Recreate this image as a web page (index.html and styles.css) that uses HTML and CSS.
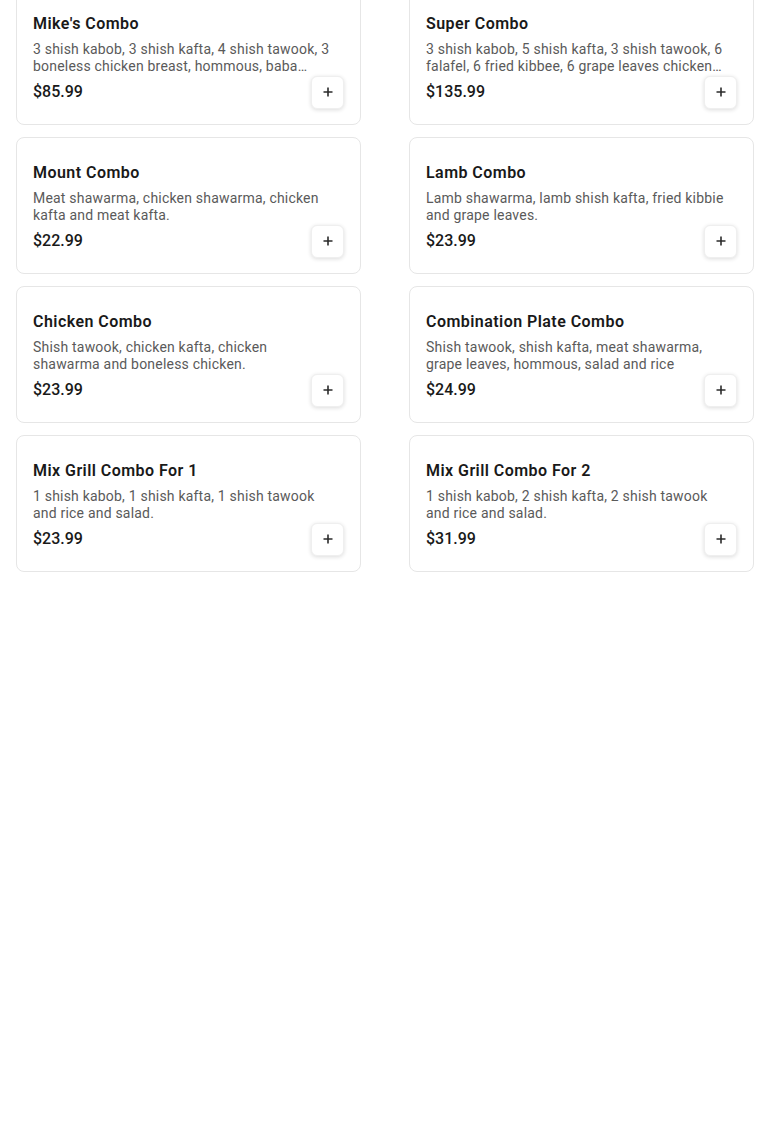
FILE: index.html
```html
<!DOCTYPE html>
<html lang="en">
<head>
    <meta charset="UTF-8">
    <meta name="viewport" content="width=device-width, initial-scale=1.0">
    <title>Combos</title>
    <link rel="stylesheet" href="styles.css">
</head>
<body>
    <div class="menu-grid">
        <div class="item-card">
            <h3 class="item-name">Mike's Combo</h3>
            <p class="item-desc">3 shish kabob, 3 shish kafta, 4 shish tawook, 3 boneless chicken breast, hommous, baba ghanouj, tabbouleh, fattoush, rice and garlic sauce.</p>
            <div class="item-footer">
                <span class="item-price">$85.99</span>
                <button class="add-btn" aria-label="Add"><svg width="12" height="12" viewBox="0 0 12 12"><path d="M6 1.5v9M1.5 6h9" stroke="#2b2b2b" stroke-width="1.6"/></svg></button>
            </div>
        </div>
        <div class="item-card">
            <h3 class="item-name">Super Combo</h3>
            <p class="item-desc">3 shish kabob, 5 shish kafta, 3 shish tawook, 6 falafel, 6 fried kibbee, 6 grape leaves chicken shawarma, meat shawarma, hommous and salad.</p>
            <div class="item-footer">
                <span class="item-price">$135.99</span>
                <button class="add-btn" aria-label="Add"><svg width="12" height="12" viewBox="0 0 12 12"><path d="M6 1.5v9M1.5 6h9" stroke="#2b2b2b" stroke-width="1.6"/></svg></button>
            </div>
        </div>
        <div class="item-card">
            <h3 class="item-name">Mount Combo</h3>
            <p class="item-desc">Meat shawarma, chicken shawarma, chicken kafta and meat kafta.</p>
            <div class="item-footer">
                <span class="item-price">$22.99</span>
                <button class="add-btn" aria-label="Add"><svg width="12" height="12" viewBox="0 0 12 12"><path d="M6 1.5v9M1.5 6h9" stroke="#2b2b2b" stroke-width="1.6"/></svg></button>
            </div>
        </div>
        <div class="item-card">
            <h3 class="item-name">Lamb Combo</h3>
            <p class="item-desc">Lamb shawarma, lamb shish kafta, fried kibbie and grape leaves.</p>
            <div class="item-footer">
                <span class="item-price">$23.99</span>
                <button class="add-btn" aria-label="Add"><svg width="12" height="12" viewBox="0 0 12 12"><path d="M6 1.5v9M1.5 6h9" stroke="#2b2b2b" stroke-width="1.6"/></svg></button>
            </div>
        </div>
        <div class="item-card">
            <h3 class="item-name">Chicken Combo</h3>
            <p class="item-desc">Shish tawook, chicken kafta, chicken shawarma and boneless chicken.</p>
            <div class="item-footer">
                <span class="item-price">$23.99</span>
                <button class="add-btn" aria-label="Add"><svg width="12" height="12" viewBox="0 0 12 12"><path d="M6 1.5v9M1.5 6h9" stroke="#2b2b2b" stroke-width="1.6"/></svg></button>
            </div>
        </div>
        <div class="item-card">
            <h3 class="item-name">Combination Plate Combo</h3>
            <p class="item-desc">Shish tawook, shish kafta, meat shawarma, grape leaves, hommous, salad and rice</p>
            <div class="item-footer">
                <span class="item-price">$24.99</span>
                <button class="add-btn" aria-label="Add"><svg width="12" height="12" viewBox="0 0 12 12"><path d="M6 1.5v9M1.5 6h9" stroke="#2b2b2b" stroke-width="1.6"/></svg></button>
            </div>
        </div>
        <div class="item-card">
            <h3 class="item-name">Mix Grill Combo For 1</h3>
            <p class="item-desc">1 shish kabob, 1 shish kafta, 1 shish tawook and rice and salad.</p>
            <div class="item-footer">
                <span class="item-price">$23.99</span>
                <button class="add-btn" aria-label="Add"><svg width="12" height="12" viewBox="0 0 12 12"><path d="M6 1.5v9M1.5 6h9" stroke="#2b2b2b" stroke-width="1.6"/></svg></button>
            </div>
        </div>
        <div class="item-card">
            <h3 class="item-name">Mix Grill Combo For 2</h3>
            <p class="item-desc">1 shish kabob, 2 shish kafta, 2 shish tawook and rice and salad.</p>
            <div class="item-footer">
                <span class="item-price">$31.99</span>
                <button class="add-btn" aria-label="Add"><svg width="12" height="12" viewBox="0 0 12 12"><path d="M6 1.5v9M1.5 6h9" stroke="#2b2b2b" stroke-width="1.6"/></svg></button>
            </div>
        </div>
    </div>
</body>
</html>
```

FILE: styles.css
```css
body {
    font-family: Roboto, "Liberation Sans", Arial, sans-serif;
    background-color: #ffffff;
    color: #191919;
    margin: 0;
    padding: 0;
}
.menu-grid {
    display: grid;
    grid-template-columns: 1fr 1fr;
    column-gap: 48px;
    row-gap: 12px;
    padding: 0 16px;
    margin-top: -12px;
}
.item-card {
    border: 1px solid #e6e6e6;
    border-radius: 8px;
    padding: 23px 16px 16px 16px;
    background-color: #ffffff;
}
.item-name {
    margin: 0;
    font-size: 16px;
    line-height: 24px;
    font-weight: 600;
    letter-spacing: 0.45px;
    color: #191919;
}
.item-desc {
    margin: 5px 10px 0 0;
    font-size: 14px;
    line-height: 17px;
    height: 34px;
    letter-spacing: 0.2px;
    color: #5a5a5a;
    overflow: hidden;
    display: -webkit-box;
    -webkit-line-clamp: 2;
    -webkit-box-orient: vertical;
}
.item-footer {
    display: flex;
    align-items: center;
    justify-content: space-between;
    height: 32px;
    margin-top: 1px;
}
.item-price {
    font-size: 16px;
    line-height: 24px;
    font-weight: 500;
    color: #191919;
}
.add-btn {
    width: 33px;
    height: 33px;
    padding: 0;
    border: 1px solid #efefef;
    border-radius: 6px;
    background-color: #ffffff;
    box-shadow: 0 1px 4px rgba(0, 0, 0, 0.14);
    display: flex;
    align-items: center;
    justify-content: center;
    cursor: pointer;
}
```
